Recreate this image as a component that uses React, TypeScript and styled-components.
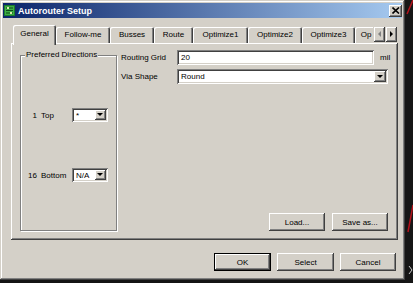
import React from 'react'
import styled, { createGlobalStyle, css } from 'styled-components'

const FACE = '#d4d0c8'

const GlobalStyle = createGlobalStyle`
  html, body {
    margin: 0;
    padding: 0;
    background: #141414;
  }
  body {
    font-family: "Liberation Sans", Arial, sans-serif;
    font-size: 8px;
    color: #000;
  }
`

const raised = css`
  background: ${FACE};
  box-shadow: inset -1px -1px #404040, inset 1px 1px #ffffff,
    inset -2px -2px #808080, inset 2px 2px ${FACE};
`

const sunken = css`
  background: #fff;
  box-shadow: inset 1px 1px #808080, inset -1px -1px #ffffff,
    inset 2px 2px #404040, inset -2px -2px ${FACE};
`

const Page = styled.div`
  display: flex;
  width: 413px;
  height: 283px;
  overflow: hidden;
`

const Window = styled.div`
  flex: none;
  width: 405px;
  height: 280px;
  box-sizing: border-box;
  padding: 3px;
  display: flex;
  flex-direction: column;
  background: ${FACE};
  box-shadow: inset -1px -1px #404040, inset 1px 1px ${FACE},
    inset -2px -2px #808080, inset 2px 2px #ffffff;
`

const Backdrop = styled.div`
  flex: 1;
  background: #161616;
  svg { display: block; }
`

const TitleBar = styled.div`
  height: 15px;
  display: flex;
  align-items: center;
  padding: 0 0 0 1px;
  background: linear-gradient(to right, #0a246a, #a6caf0);
`

const Title = styled.span`
  margin-left: 3px;
  color: #fff;
  font-weight: bold;
  font-size: 9px;
`

const CloseButton = styled.div`
  ${raised};
  margin-left: auto;
  width: 13px;
  height: 12px;
  display: flex;
  align-items: center;
  justify-content: center;
`

const Body = styled.div`
  flex: 1;
  display: flex;
  flex-direction: column;
  padding: 7px 4px 0 8px;
`

const TabStrip = styled.div`
  display: flex;
  align-items: flex-end;
  height: 18px;
`

const TabClip = styled.div`
  flex: 1;
  display: flex;
  align-items: flex-end;
  overflow: hidden;
  padding-left: 2px;
  height: 20px;
  margin-bottom: -2px;
`

const Tab = styled.div<{ $w: number; $active?: boolean }>`
  flex: none;
  width: ${p => p.$w}px;
  height: ${p => (p.$active ? 20 : 16)}px;
  margin-bottom: ${p => (p.$active ? 0 : 2)}px;
  box-sizing: border-box;
  padding-top: ${p => (p.$active ? 4 : 3)}px;
  text-align: center;
  white-space: nowrap;
  background: ${FACE};
  border-radius: 2px 2px 0 0;
  box-shadow: inset 1px 1px #ffffff, inset -1px 0 #404040, inset -2px 0 #808080;
  position: relative;
  z-index: ${p => (p.$active ? 1 : 0)};
`

const ScrollPair = styled.div`
  flex: none;
  display: flex;
  gap: 1px;
  margin: 0 1px 1px 1px;
`

const ScrollButton = styled.div`
  ${raised};
  width: 11px;
  height: 15px;
  display: flex;
  align-items: center;
  justify-content: center;
`

const Panel = styled.div`
  height: 197px;
  box-sizing: border-box;
  display: flex;
  gap: 4px;
  padding: 7px 10px 9px 9px;
  ${raised};
`

const Group = styled.div`
  flex: none;
  width: 97px;
  margin-top: 5px;
  box-sizing: border-box;
  display: flex;
  flex-direction: column;
  border: 1px solid #808080;
  box-shadow: inset 1px 1px #ffffff, 1px 1px #ffffff;
`

const GroupLabel = styled.span`
  align-self: flex-start;
  margin: -6px 0 0 4px;
  padding: 0 1px;
  line-height: 10px;
  background: ${FACE};
`

const LayerRows = styled.div`
  display: flex;
  flex-direction: column;
  gap: 46px;
  margin-top: 48px;
`

const LayerRow = styled.div`
  display: flex;
  align-items: center;
  height: 14px;
`

const LayerNum = styled.span`
  width: 16px;
  text-align: right;
`

const LayerName = styled.span`
  width: 35px;
  box-sizing: border-box;
  padding-left: 4px;
`

const Settings = styled.div`
  flex: 1;
  display: flex;
  flex-direction: column;
  justify-content: space-between;
`

const Form = styled.div`
  display: grid;
  grid-template-columns: 50px 1fr 8px;
  column-gap: 6px;
  row-gap: 4px;
  align-items: center;
`

const Label = styled.span`
  white-space: nowrap;
`

const Field = styled.div<{ $w?: number; $span?: boolean }>`
  ${sunken};
  ${p => (p.$w ? `width: ${p.$w}px;` : '')}
  ${p => (p.$span ? 'grid-column: 2 / 4;' : '')}
  height: ${p => (p.$w ? 14 : 15)}px;
  box-sizing: border-box;
  display: flex;
  align-items: center;
  padding: 0 2px 0 4px;
`

const FieldText = styled.span`
  flex: 1;
`

const DropButton = styled.div<{ $small?: boolean }>`
  ${raised};
  width: ${p => (p.$small ? 11 : 12)}px;
  height: ${p => (p.$small ? 10 : 11)}px;
  display: flex;
  align-items: center;
  justify-content: center;
`

const FileButtons = styled.div`
  display: flex;
  justify-content: flex-end;
  gap: 7px;
`

const Button = styled.button<{ $w?: number; $default?: boolean }>`
  width: ${p => p.$w ?? 56}px;
  height: 18px;
  padding: 0;
  border: none;
  font: inherit;
  color: #000;
  background: ${FACE};
  box-shadow: ${p =>
    p.$default
      ? `inset 0 0 0 1px #000, inset -2px -2px #404040, inset 2px 2px #ffffff, inset -3px -3px #808080`
      : `inset -1px -1px #404040, inset 1px 1px #ffffff, inset -2px -2px #808080, inset 2px 2px ${FACE}`};
`

const DialogButtons = styled.div`
  display: flex;
  justify-content: flex-end;
  gap: 6px;
  margin-top: 13px;
  padding-right: 2px;
`

const Arrow = ({ dir = 'down', color = '#000' }: { dir?: 'down' | 'left' | 'right'; color?: string }) => {
  const pts = dir === 'down' ? '0,0 6,0 3,3' : dir === 'left' ? '3,0 3,6 0,3' : '0,0 0,6 3,3'
  const w = dir === 'down' ? 6 : 3
  const h = dir === 'down' ? 3 : 6
  return (
    <svg width={w + 1} height={h + 1} viewBox={`0 0 ${w + 1} ${h + 1}`}>
      <polygon points={pts} fill={color} />
    </svg>
  )
}

const BoardIcon = () => (
  <svg width="11" height="11" viewBox="0 0 11 11">
    <rect x="0" y="0" width="11" height="11" fill="#1c7a2c" />
    <rect x="1" y="1" width="9" height="9" fill="#3fae45" />
    <path d="M2 3h7M2 5.5h7M2 8h7" stroke="#0d4a17" strokeWidth="1" />
    <rect x="3" y="2" width="2" height="2" fill="#d8e8b0" />
    <rect x="6" y="7" width="2" height="2" fill="#d8e8b0" />
  </svg>
)

// the last tab is cut by the scroll arrows, only "Op" shows
const tabs = [
  { label: 'General', w: 43 },
  { label: 'Follow-me', w: 54 },
  { label: 'Busses', w: 44 },
  { label: 'Route', w: 39 },
  { label: 'Optimize1', w: 55 },
  { label: 'Optimize2', w: 54 },
  { label: 'Optimize3', w: 53 },
  { label: 'Op', w: 22 },
]

const layers = [
  { num: '1', name: 'Top', dir: '*' },
  { num: '16', name: 'Bottom', dir: 'N/A' },
]

const App: React.FC = () => {
  return (
    <Page>
      <GlobalStyle />
      <Window>
        <TitleBar>
          <BoardIcon />
          <Title>Autorouter Setup</Title>
          <CloseButton>
            <svg width="8" height="7" viewBox="0 0 8 7">
              <path d="M0.5 0.5L7 6.5M7 0.5L0.5 6.5" stroke="#000" strokeWidth="1.6" />
            </svg>
          </CloseButton>
        </TitleBar>
        <Body>
          <TabStrip>
            <TabClip>
              {tabs.map((t, i) => (
                <Tab key={t.label} $w={t.w} $active={i === 0}>
                  {t.label}
                </Tab>
              ))}
            </TabClip>
            <ScrollPair>
              <ScrollButton>
                <Arrow dir="left" color="#808080" />
              </ScrollButton>
              <ScrollButton>
                <Arrow dir="right" />
              </ScrollButton>
            </ScrollPair>
          </TabStrip>
          <Panel>
            <Group>
              <GroupLabel>Preferred Directions</GroupLabel>
              <LayerRows>
                {layers.map(l => (
                  <LayerRow key={l.num}>
                    <LayerNum>{l.num}</LayerNum>
                    <LayerName>{l.name}</LayerName>
                    <Field $w={36}>
                      <FieldText>{l.dir}</FieldText>
                      <DropButton $small>
                        <Arrow />
                      </DropButton>
                    </Field>
                  </LayerRow>
                ))}
              </LayerRows>
            </Group>
            <Settings>
              <Form>
                <Label>Routing Grid</Label>
                <Field>
                  <FieldText>20</FieldText>
                </Field>
                <Label>mil</Label>
                <Label>Via Shape</Label>
                <Field $span>
                  <FieldText>Round</FieldText>
                  <DropButton>
                    <Arrow />
                  </DropButton>
                </Field>
              </Form>
              <FileButtons>
                <Button>Load...</Button>
                <Button>Save as...</Button>
              </FileButtons>
            </Settings>
          </Panel>
          <DialogButtons>
            <Button $w={57} $default>OK</Button>
            <Button $w={57}>Select</Button>
            <Button>Cancel</Button>
          </DialogButtons>
        </Body>
      </Window>
      <Backdrop>
        <svg width="8" height="283" viewBox="0 0 8 283">
          <path d="M8 0L2 14" stroke="#b3121b" strokeWidth="1.5" />
          <path d="M8 205L3 232" stroke="#b3121b" strokeWidth="1.5" />
          <path d="M4 266L7 270L4 274" stroke="#c8c8c8" strokeWidth="1" fill="none" />
        </svg>
      </Backdrop>
    </Page>
  )
}

export default App
